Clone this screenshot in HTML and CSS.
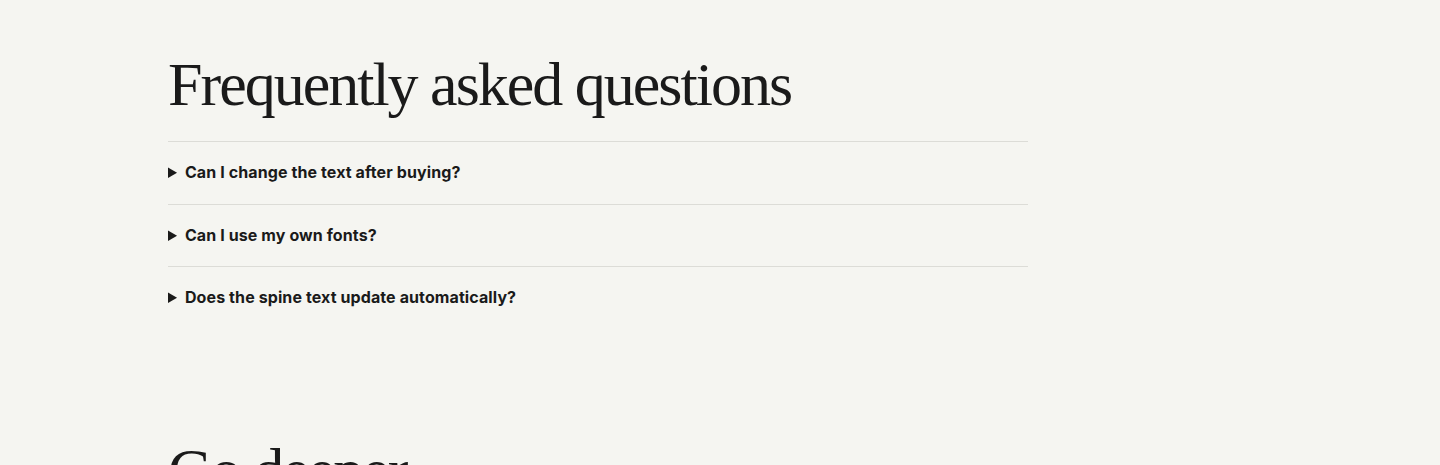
FILE: index.html
```html
<!DOCTYPE html>
<html lang="en">
<head>
  <meta charset="UTF-8">
  <title>FAQ</title>
  <link rel="stylesheet" href="styles.css">
</head>
<body>

<section class="faq">
  <h2 class="section-title">Frequently asked questions</h2>

  <div class="faq-list">
    <details class="faq-item">
      <summary>Can I change the text after buying?</summary>
      <p>Yes. You can edit every line of text at any time from your library.</p>
    </details>

    <details class="faq-item">
      <summary>Can I use my own fonts?</summary>
      <p>You can upload your own font files and use them on the cover.</p>
    </details>

    <details class="faq-item">
      <summary>Does the spine text update automatically?</summary>
      <p>Yes, the spine follows the title and author you set on the cover.</p>
    </details>
  </div>
</section>

<section class="deeper">
  <h2 class="section-title">Go deeper</h2>
</section>

</body>
</html>
```

FILE: styles.css
```css
body {
  margin: 0;
  background-color: #f5f5f1;
  color: #1a1a1a;
  font-family: "Liberation Serif", serif;
}
.faq,
.deeper {
  max-width: 860px;
  margin: 0 auto 0 168px;
}
.faq {
  padding-top: 49px;
}
.section-title {
  font-family: "Liberation Serif", serif;
  font-weight: 400;
  font-size: 62px;
  line-height: 70px;
  letter-spacing: -2px;
  margin: 0 0 22px;
}
.faq-list {
  border-top: 1px solid #dcdcd7;
}
.faq-item {
  border-bottom: 1px solid #dcdcd7;
}
.faq-item:last-child {
  border-bottom: none;
}
.faq-item summary {
  font-family: "Inter", sans-serif;
  font-weight: 700;
  font-size: 16px;
  line-height: 21.5px;
  letter-spacing: 0.1px;
  padding: 20px 0;
  cursor: pointer;
}
.faq-item p {
  font-family: "Inter", sans-serif;
  font-size: 15px;
  margin: 0 0 20px;
}
.deeper {
  padding-top: 106px;
}
```
